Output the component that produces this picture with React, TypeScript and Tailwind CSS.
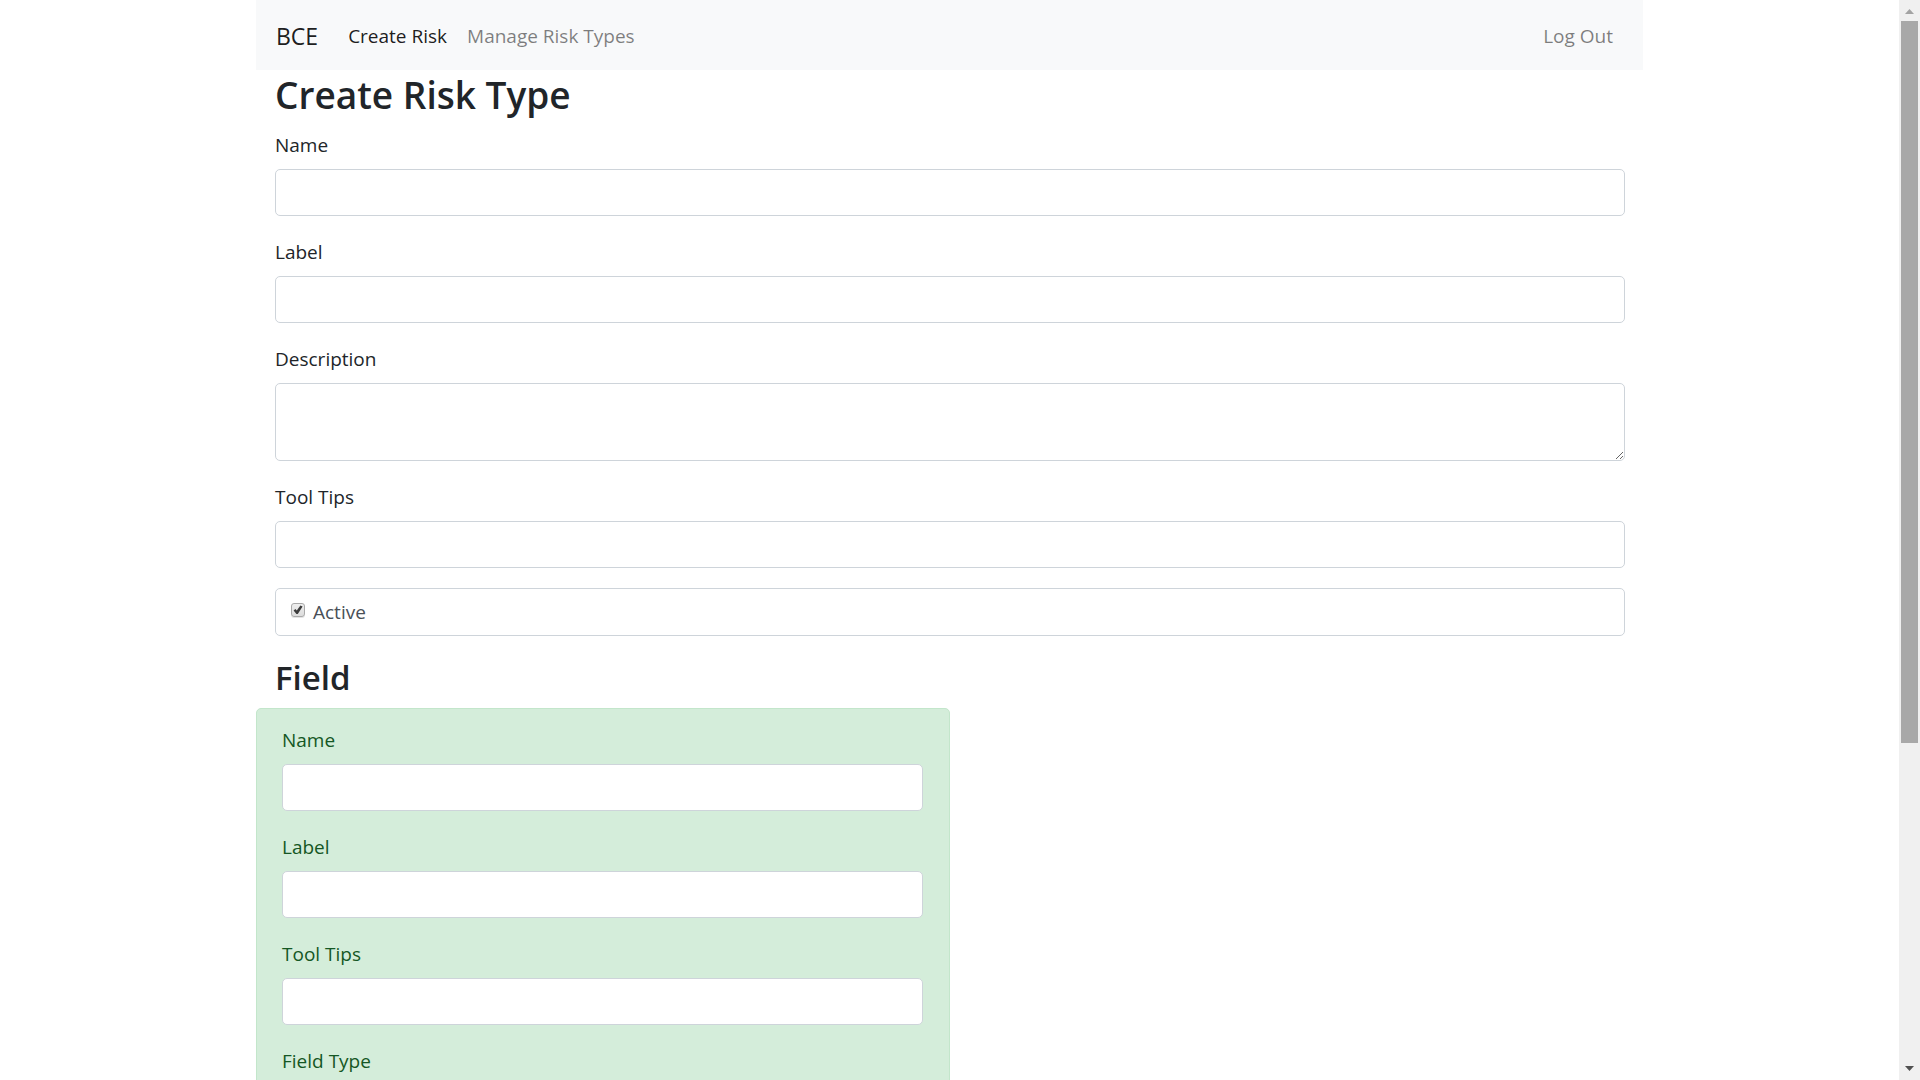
import React from "react";

const control =
  "block w-full rounded-[5px] border border-[#ced4da] bg-white px-[15px] text-[19px] text-[#495057] outline-none";

function TextField({ id, label }: { id: string; label: string }) {
  return (
    <div className="mb-5">
      <label htmlFor={id} className="mb-2 block">
        {label}
      </label>
      <input id={id} type="text" className={`${control} h-[47px]`} />
    </div>
  );
}

function Navbar() {
  return (
    <nav className="flex h-[70px] items-center bg-[#f8f9fa] px-5 pt-0.5">
      <a href="#home" className="mr-5 text-[23px] text-black/90">
        BCE
      </a>
      <ul className="flex flex-1 items-center">
        <li>
          <a href="#create" className="block px-2.5 text-black/90">
            Create Risk
          </a>
        </li>
        <li>
          <a href="#types" className="block px-2.5 text-black/50">
            Manage Risk Types
          </a>
        </li>
        <li className="ml-auto">
          <a href="#logout" className="block px-2.5 text-black/50">
            Log Out
          </a>
        </li>
      </ul>
    </nav>
  );
}

function ActiveBox() {
  return (
    <label className="mb-5 flex h-12 items-center rounded-[5px] border border-[#ced4da] bg-white pl-[15px] text-[#495057]">
      <span className="mr-2 grid h-[18px] w-3.5">
        <input
          type="checkbox"
          defaultChecked
          className="peer col-start-1 row-start-1 h-3.5 w-3.5 appearance-none rounded-[3px] border border-[#a9a9a9] bg-linear-to-b from-[#eeeeee] to-[#dcdcdc] shadow-[0_1px_0_#e4e4e4]"
        />
        <svg
          viewBox="0 0 14 14"
          className="pointer-events-none invisible col-start-1 row-start-1 h-3.5 w-3.5 peer-checked:visible"
          aria-hidden="true"
        >
          <path d="M2.6 7.4 L4.4 6 L5.8 7.6 L9.4 2.4 L11.6 3.6 L6.8 11 L5.4 11 Z" fill="#3c3c3c" />
        </svg>
      </span>
      Active
    </label>
  );
}

function ScrollRail() {
  return (
    <div className="flex w-[21px] shrink-0 flex-col items-center bg-[#f0f0f0]" aria-hidden="true">
      <div className="flex h-[21px] items-center justify-center">
        <svg width="9" height="5" viewBox="0 0 9 5" className="mt-0.5">
          <path d="M0 5 L4.5 0 L9 5 Z" fill="#a3a3a3" />
        </svg>
      </div>
      <div className="flex w-[17px] flex-1 flex-col">
        <div className="h-[69.6%] bg-[#a8a8a8]" />
      </div>
      <div className="flex h-[21px] items-center justify-center">
        <svg width="9" height="5" viewBox="0 0 9 5" className="mb-0.5">
          <path d="M0 0 L9 0 L4.5 5 Z" fill="#505050" />
        </svg>
      </div>
    </div>
  );
}

export default function App() {
  return (
    <div className="flex h-screen overflow-hidden bg-white font-['Open_Sans','Noto_Sans',sans-serif] text-[19px] leading-8 text-[#212529]">
      <div className="min-w-0 flex-1 overflow-hidden">
        <div className="mx-auto max-w-[1387px]">
          <Navbar />
          <form>
            <div className="pr-[18px] pl-[19px]">
              <h1 className="mb-[9px] text-[37px] font-semibold leading-[50px]">Create Risk Type</h1>
              <TextField id="risk-name" label="Name" />
              <TextField id="risk-label" label="Label" />
              <div className="mb-5">
                <label htmlFor="risk-description" className="mb-2 block">
                  Description
                </label>
                <textarea id="risk-description" className={`${control} h-[78px] resize`} />
              </div>
              <TextField id="risk-tips" label="Tool Tips" />
              <ActiveBox />
              <h2 className="mb-2 text-[33px] font-semibold leading-[44px]">Field</h2>
            </div>
            <section className="w-1/2 rounded-[5px] border border-[#c3e6cb] bg-[#d4edda] pt-[15px] pr-[26px] pb-[15px] pl-[25px] text-[#155724]">
              <TextField id="field-name" label="Name" />
              <TextField id="field-label" label="Label" />
              <TextField id="field-tips" label="Tool Tips" />
              <label htmlFor="field-type" className="mb-2 block">
                Field Type
              </label>
              <select id="field-type" className={`${control} h-[47px]`} />
            </section>
          </form>
        </div>
      </div>
      <ScrollRail />
    </div>
  );
}
